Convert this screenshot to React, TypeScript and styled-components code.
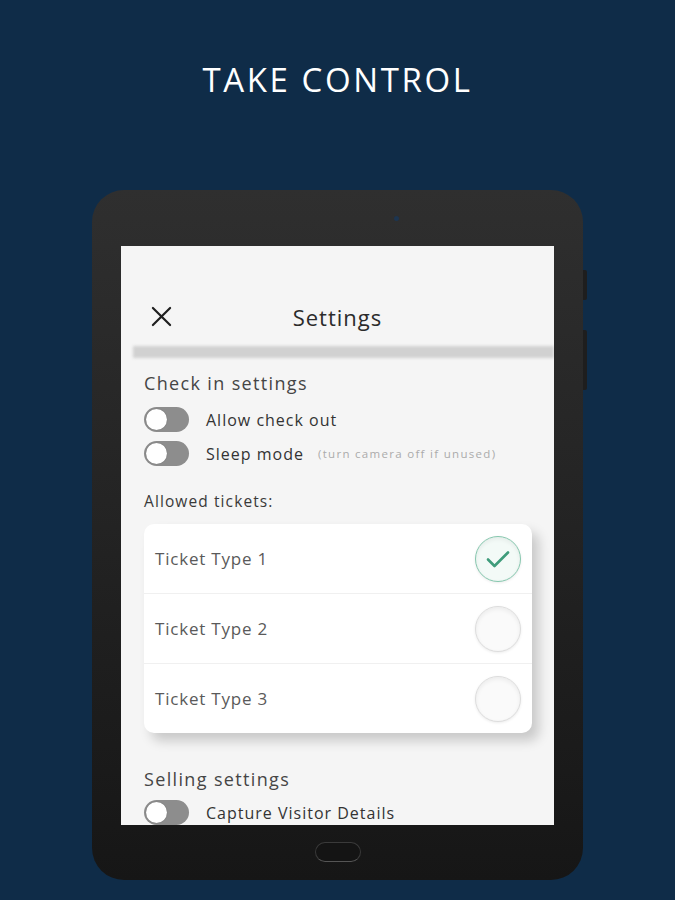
import React from 'react';
import styled, { createGlobalStyle } from 'styled-components';

const GlobalStyle = createGlobalStyle`
  html, body {
    margin: 0;
    padding: 0;
    background: #0f2c48;
  }
  body {
    font-family: "Open Sans", "Liberation Sans", sans-serif;
  }
`;

const Page = styled.div`
  width: 675px;
  height: 900px;
  overflow: hidden;
  background: #0f2c48;
  display: flex;
  flex-direction: column;
  align-items: center;
`;

const Title = styled.h1`
  margin: 58px 0 0;
  height: 44px;
  line-height: 44px;
  font-size: 33px;
  font-weight: 400;
  letter-spacing: 2.6px;
  color: #ffffff;
`;

const Tablet = styled.div`
  position: relative;
  margin-top: 88px;
  width: 491px;
  height: 690px;
  box-sizing: border-box;
  padding: 0 29px;
  border-radius: 32px;
  background: linear-gradient(180deg, #2f2f2f 0%, #242424 45%, #161616 100%);
  display: flex;
  flex-direction: column;
`;

const TopBezel = styled.div`
  height: 56px;
  display: flex;
  justify-content: center;
  padding-top: 26px;
  box-sizing: border-box;
`;

const Camera = styled.div`
  width: 5px;
  height: 5px;
  margin-left: 118px;
  border-radius: 50%;
  background: #1d3550;
`;

const SideButton = styled.div<{ $top: number; $height: number }>`
  position: absolute;
  right: -4px;
  top: ${(p) => p.$top}px;
  width: 4px;
  height: ${(p) => p.$height}px;
  border-radius: 0 2px 2px 0;
  background: #1e1e1e;
`;

const Screen = styled.div`
  height: 579px;
  background: #f5f5f5;
  overflow: hidden;
  display: flex;
  flex-direction: column;
`;

const BottomBezel = styled.div`
  flex: 1;
  display: flex;
  align-items: center;
  justify-content: center;
  padding-bottom: 2px;
`;

const HomeButton = styled.div`
  width: 44px;
  height: 18px;
  border-radius: 10px;
  border: 1.5px solid #3a3a3a;
  border-bottom-color: #555;
  background: #141414;
`;

const Header = styled.div`
  height: 104px;
  box-sizing: border-box;
  padding: 0 0 12px 30px;
  display: flex;
  align-items: flex-end;
  position: relative;
`;

const HeaderRow = styled.div`
  height: 34px;
  flex: 1;
  display: flex;
  align-items: center;
`;

const HeaderTitle = styled.div`
  position: absolute;
  left: 0;
  right: 0;
  bottom: 12px;
  height: 34px;
  line-height: 34px;
  text-align: center;
  font-size: 22px;
  letter-spacing: 1px;
  color: #2b2b2b;
  pointer-events: none;
`;

const ShadowBar = styled.div`
  height: 13px;
  margin-left: 12px;
  background: #d1d1d1;
  filter: blur(1.5px);
`;

const Content = styled.div`
  padding: 0 22px 0 23px;
  display: flex;
  flex-direction: column;
`;

const SectionTitle = styled.div<{ $top: number }>`
  margin-top: ${(p) => p.$top}px;
  height: 24px;
  line-height: 24px;
  font-size: 18px;
  letter-spacing: 1.35px;
  color: #454545;
`;

const ToggleRow = styled.div<{ $top: number }>`
  margin-top: ${(p) => p.$top}px;
  height: 25px;
  display: flex;
  align-items: center;
`;

const Toggle = styled.div`
  width: 45px;
  height: 25px;
  flex-shrink: 0;
  border-radius: 13px;
  background: #8d8d8d;
  display: flex;
  align-items: center;
  padding-left: 2px;
  box-sizing: border-box;
`;

const Knob = styled.div`
  width: 21px;
  height: 21px;
  border-radius: 50%;
  background: #ffffff;
  box-shadow: 0 0 1px rgba(0, 0, 0, 0.4);
`;

const ToggleLabel = styled.span`
  margin-left: 17px;
  font-size: 16px;
  letter-spacing: 1px;
  color: #333333;
`;

const Hint = styled.span`
  margin-left: 14px;
  font-size: 11.5px;
  letter-spacing: 1.3px;
  color: #ababab;
`;

const SubTitle = styled.div`
  margin-top: 25px;
  height: 20px;
  line-height: 20px;
  font-size: 15.5px;
  letter-spacing: 1.1px;
  color: #3a3a3a;
`;

const Card = styled.div`
  margin-top: 13px;
  background: #ffffff;
  border-radius: 10px;
  box-shadow: 7px 8px 12px rgba(0, 0, 0, 0.18);
  display: flex;
  flex-direction: column;
`;

const TicketRow = styled.div`
  height: 69px;
  padding: 0 11px 0 11px;
  display: flex;
  align-items: center;
  justify-content: space-between;
  & + & {
    border-top: 1px solid #f0f0f0;
  }
`;

const TicketLabel = styled.span`
  font-size: 17px;
  letter-spacing: 0.8px;
  color: #5a5a5a;
`;

const Circle = styled.div<{ $checked: boolean }>`
  width: 46px;
  height: 46px;
  box-sizing: border-box;
  border-radius: 50%;
  border: 1.5px solid ${(p) => (p.$checked ? '#86c7ae' : '#dddddd')};
  background: ${(p) => (p.$checked ? '#f3faf7' : '#fafafa')};
  box-shadow: inset 0 2px 4px rgba(0, 0, 0, 0.06), 0 1px 3px rgba(0, 0, 0, 0.08);
  display: flex;
  align-items: center;
  justify-content: center;
`;

const Check = () => (
  <svg width="26" height="20" viewBox="0 0 26 20" fill="none">
    <path d="M3 10.5 L9.5 17 L23 3.5" stroke="#3f9c7b" strokeWidth="2.6" strokeLinecap="round" strokeLinejoin="round" />
  </svg>
);

const CloseIcon = () => (
  <svg width="21" height="21" viewBox="0 0 22 22" fill="none">
    <path d="M2 2 L20 20 M20 2 L2 20" stroke="#1f1f1f" strokeWidth="2.3" strokeLinecap="round" />
  </svg>
);

const tickets = [
  { name: 'Ticket Type 1', checked: true },
  { name: 'Ticket Type 2', checked: false },
  { name: 'Ticket Type 3', checked: false },
];

const App = (): React.ReactElement => (
  <Page>
    <GlobalStyle />
    <Title>TAKE CONTROL</Title>
    <Tablet>
      <SideButton $top={80} $height={30} />
      <SideButton $top={140} $height={60} />
      <TopBezel>
        <Camera />
      </TopBezel>
      <Screen>
        <Header>
          <HeaderRow>
            <CloseIcon />
          </HeaderRow>
          <HeaderTitle>Settings</HeaderTitle>
        </Header>
        <ShadowBar />
        <Content>
          <SectionTitle $top={13}>Check in settings</SectionTitle>
          <ToggleRow $top={12}>
            <Toggle>
              <Knob />
            </Toggle>
            <ToggleLabel>Allow check out</ToggleLabel>
          </ToggleRow>
          <ToggleRow $top={9}>
            <Toggle>
              <Knob />
            </Toggle>
            <ToggleLabel>Sleep mode</ToggleLabel>
            <Hint>(turn camera off if unused)</Hint>
          </ToggleRow>
          <SubTitle>Allowed tickets:</SubTitle>
          <Card>
            {tickets.map((t) => (
              <TicketRow key={t.name}>
                <TicketLabel>{t.name}</TicketLabel>
                <Circle $checked={t.checked}>{t.checked && <Check />}</Circle>
              </TicketRow>
            ))}
          </Card>
          <SectionTitle $top={34}>Selling settings</SectionTitle>
          <ToggleRow $top={9}>
            <Toggle>
              <Knob />
            </Toggle>
            <ToggleLabel>Capture Visitor Details</ToggleLabel>
          </ToggleRow>
        </Content>
      </Screen>
      <BottomBezel>
        <HomeButton />
      </BottomBezel>
    </Tablet>
  </Page>
);

export default App;
